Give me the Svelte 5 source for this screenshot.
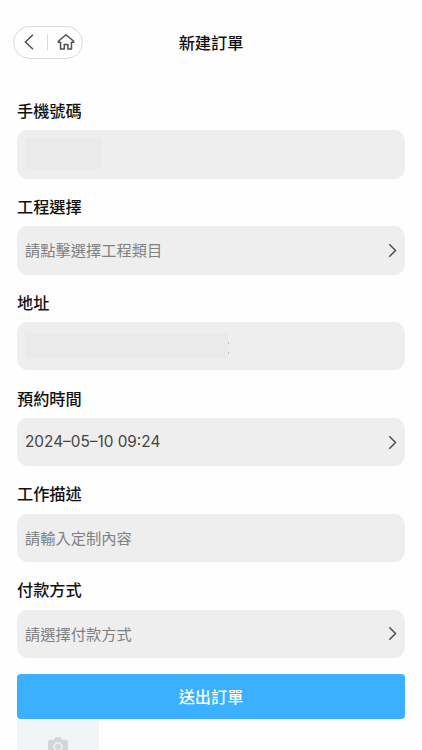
<script>
  const fields = [
    { label: '手機號碼', masked: 'phone' },
    { label: '工程選擇', placeholder: '請點擊選擇工程類目', arrow: true },
    { label: '地址', masked: 'address' },
    { label: '預約時間', value: '2024–05–10 09:24', arrow: true },
    { label: '工作描述', placeholder: '請輸入定制內容' },
    { label: '付款方式', placeholder: '請選擇付款方式', arrow: true }
  ];
</script>

<main class="page">
  <header class="nav">
    <div class="capsule">
      <svg class="back" width="12" height="18" viewBox="0 0 12 18"><path d="M10 1.7 2.4 9l7.6 7.3" /></svg>
      <span class="divider"></span>
      <svg class="home" width="18" height="18" viewBox="0 0 18 18">
        <path d="M9 1.7 1.3 8.3V9.2H3.5V16H7.3V11.4H10.9V16H14.5V9.2H16.7V8.3Z" />
      </svg>
    </div>
    <h1>新建訂單</h1>
    <div class="side"></div>
  </header>

  <form class="form">
    {#each fields as field}
      <section class="field">
        <div class="label">{field.label}</div>
        <div class="box">
          {#if field.masked}
            <span class="mask {field.masked}"></span>
            {#if field.masked === 'address'}
              <span class="dots"><i></i><i></i></span>
            {/if}
          {:else if field.value}
            <span class="value">{field.value}</span>
          {:else}
            <span class="placeholder">{field.placeholder}</span>
          {/if}
          {#if field.arrow}
            <svg class="arrow" width="9" height="15" viewBox="0 0 9 15"><path d="m1.3 1.3 6.2 6.2-6.2 6.2" /></svg>
          {/if}
        </div>
      </section>
    {/each}
    <button type="button" class="submit">送出訂單</button>
  </form>

  <div class="upload">
    <svg width="20" height="18" viewBox="0 0 20 18">
      <path class="body" d="M5.8 2.8 7 .8Q7.4.2 8 .2h4q.6 0 1 .6l1.2 2H18q2 0 2 2V16q0 2-2 2H2q-2 0-2-2V4.8q0-2 2-2Z" />
      <circle cx="10" cy="9.7" r="3.9" />
    </svg>
  </div>
</main>

<style>
  :global(body) {
    background: #fefefe;
  }
  .page {
    box-sizing: border-box;
    height: 750px;
    overflow: hidden;
    display: flex;
    flex-direction: column;
    background: #fefefe;
    color: #111;
    font-family: 'Noto Sans CJK TC', sans-serif;
  }
  .nav {
    flex: none;
    height: 34px;
    padding: 25px 13px 0;
    margin-bottom: 39px;
    display: flex;
    align-items: center;
    justify-content: space-between;
  }
  .capsule,
  .side {
    width: 70px;
    box-sizing: border-box;
  }
  .capsule {
    height: 33px;
    border: 1px solid #d9d9d9;
    border-radius: 17px;
    display: flex;
    align-items: center;
    padding-left: 9px;
  }
  svg {
    display: block;
    flex: none;
    fill: none;
    stroke: #505050;
    stroke-width: 1.5;
  }
  .divider {
    width: 1px;
    height: 16px;
    margin: 0 9px 0 12px;
    background: #d9d9d9;
  }
  .home {
    stroke-linejoin: round;
  }
  h1 {
    margin: 0;
    padding-bottom: 1px;
    font-size: 16.2px;
    line-height: 24px;
    font-weight: 500;
  }
  .form {
    flex: none;
    padding: 0 17px;
    display: flex;
    flex-direction: column;
  }
  .field {
    height: 95.85px;
  }
  .label {
    height: 24px;
    margin-bottom: 8.3px;
    font-size: 16.2px;
    line-height: 24px;
    font-weight: 500;
  }
  .box {
    height: 48.5px;
    box-sizing: border-box;
    border-radius: 11px;
    background: #eee;
    padding: 0 8px;
    display: flex;
    align-items: center;
    font-size: 15.25px;
    line-height: 24px;
  }
  .placeholder {
    margin-bottom: 2px;
    color: #808080;
  }
  .value {
    color: #444;
    font-family: Inter, 'Liberation Sans', sans-serif;
    font-size: 15.35px;
  }
  .arrow {
    margin-left: auto;
  }
  .mask {
    background: #eaeaea;
  }
  .phone {
    width: 76px;
    height: 31px;
    margin-bottom: 3px;
  }
  .address {
    width: 203px;
    height: 26px;
    border-radius: 2px;
  }
  .dots {
    display: flex;
    flex-direction: column;
    gap: 8px;
    margin-top: 4px;
  }
  .dots i {
    width: 1px;
    height: 2px;
    background: #bbb;
  }
  .submit {
    height: 45px;
    margin-top: 0.8px;
    padding: 0;
    border: 0;
    border-radius: 4px;
    background: #3bb0ff;
    color: #fff;
    font: 500 16.2px/24px 'Noto Sans CJK TC', sans-serif;
  }
  .upload {
    flex: none;
    width: 82px;
    height: 82px;
    margin: 1px 0 0 17px;
    padding-top: 17px;
    box-sizing: border-box;
    background: #f3f4f6;
    display: flex;
    justify-content: center;
    align-items: flex-start;
  }
  .upload svg {
    stroke: none;
  }
  .upload .body {
    fill: #d3d5d8;
  }
  .upload circle {
    fill: #d3d5d8;
    stroke: #f3f4f6;
    stroke-width: 1.5;
  }
</style>
